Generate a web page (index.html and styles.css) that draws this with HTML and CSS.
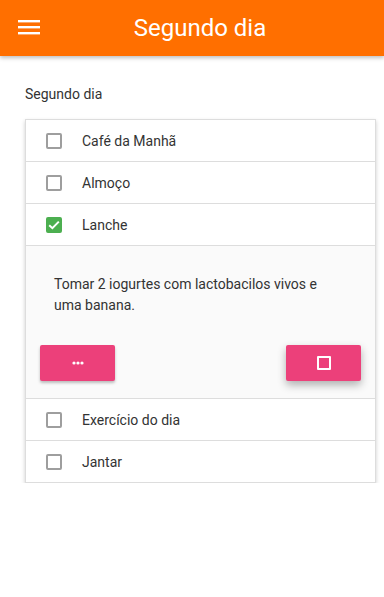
FILE: index.html
```html
<!DOCTYPE html>
<html lang="pt">
<head>
    <meta charset="UTF-8">
    <meta name="viewport" content="width=device-width, initial-scale=1.0">
    <title>Segundo dia</title>
    <link rel="stylesheet" href="styles.css">
</head>
<body>
    <header class="toolbar">
        <button class="menu-btn" aria-label="Menu">
            <svg width="22" height="16" viewBox="0 0 22 16">
                <rect x="0" y="1" width="22" height="2.4" fill="#fff"/>
                <rect x="0" y="7" width="22" height="2.4" fill="#fff"/>
                <rect x="0" y="13" width="22" height="2.4" fill="#fff"/>
            </svg>
        </button>
        <h1 class="title">Segundo dia</h1>
    </header>

    <main class="content">
        <div class="section-label">Segundo dia</div>

        <div class="card">
            <div class="item">
                <span class="check"></span>
                <span class="item-text">Café da Manhã</span>
            </div>
            <div class="item">
                <span class="check"></span>
                <span class="item-text">Almoço</span>
            </div>
            <div class="item">
                <span class="check checked">
                    <svg width="12" height="10" viewBox="0 0 12 10">
                        <path d="M1.2 5.2 L4.4 8.2 L10.8 1.6" fill="none" stroke="#fff" stroke-width="2"/>
                    </svg>
                </span>
                <span class="item-text">Lanche</span>
            </div>

            <!-- expanded details -->
            <div class="details">
                <p class="details-text">Tomar 2 iogurtes com lactobacilos vivos e uma banana.</p>
                <div class="actions">
                    <button class="btn">
                        <svg width="12" height="4" viewBox="0 0 12 4">
                            <circle cx="2" cy="2" r="1.6" fill="#fff"/>
                            <circle cx="6" cy="2" r="1.6" fill="#fff"/>
                            <circle cx="10" cy="2" r="1.6" fill="#fff"/>
                        </svg>
                    </button>
                    <button class="btn btn-raised">
                        <span class="square"></span>
                    </button>
                </div>
            </div>

            <div class="item">
                <span class="check"></span>
                <span class="item-text">Exercício do dia</span>
            </div>
            <div class="item">
                <span class="check"></span>
                <span class="item-text">Jantar</span>
            </div>
        </div>
    </main>
</body>
</html>
```

FILE: styles.css
```css
body {
    margin: 0;
    background-color: #fff;
    font-family: Roboto, "Liberation Sans", Arial, sans-serif;
    color: #333;
}
/* Toolbar */
.toolbar {
    position: relative;
    height: 56px;
    background-color: #ff6f00;
    display: flex;
    align-items: center;
    justify-content: center;
    padding-left: 16px;
    box-shadow: 0 2px 4px rgba(0, 0, 0, 0.25);
}
.menu-btn {
    position: absolute;
    left: 18px;
    top: 19px;
    padding: 0;
    border: none;
    background: none;
    display: flex;
}
.title {
    margin: 0;
    font-size: 24px;
    font-weight: 400;
    color: #fff;
}
/* Content */
.content {
    padding: 28px 8px 0 25px;
}
.section-label {
    font-size: 14px;
    line-height: 20px;
    color: #333;
    margin-bottom: 15px;
}
.card {
    border: 1px solid #ddd;
    background-color: #fff;
    box-shadow: 0 2px 4px rgba(0, 0, 0, 0.2);
}
.item {
    display: flex;
    align-items: center;
    height: 41px;
    border-bottom: 1px solid #ddd;
    padding-left: 20px;
}
.item:last-child {
    border-bottom: none;
}
.check {
    width: 12px;
    height: 12px;
    border: 2px solid #9e9e9e;
    border-radius: 2px;
    margin-right: 20px;
    display: flex;
    align-items: center;
    justify-content: center;
}
.check.checked {
    background-color: #4caf50;
    border-color: #4caf50;
}
.item-text {
    font-size: 14px;
}
/* Expanded details */
.details {
    background-color: #fafafa;
    border-bottom: 1px solid #ddd;
    padding: 28px 14px 17px 14px;
}
.details-text {
    margin: 0 0 29px 14px;
    padding-right: 40px;
    font-size: 14px;
    line-height: 21px;
}
.actions {
    display: flex;
    justify-content: space-between;
}
.btn {
    width: 75px;
    height: 36px;
    border: none;
    border-radius: 2px;
    background-color: #ec407a;
    display: flex;
    align-items: center;
    justify-content: center;
    box-shadow: 0 2px 3px rgba(0, 0, 0, 0.25);
    cursor: pointer;
}
.btn-raised {
    box-shadow: 0 4px 8px rgba(0, 0, 0, 0.3);
}
.square {
    width: 10px;
    height: 10px;
    border: 2px solid #fff;
    border-radius: 1px;
}
```
